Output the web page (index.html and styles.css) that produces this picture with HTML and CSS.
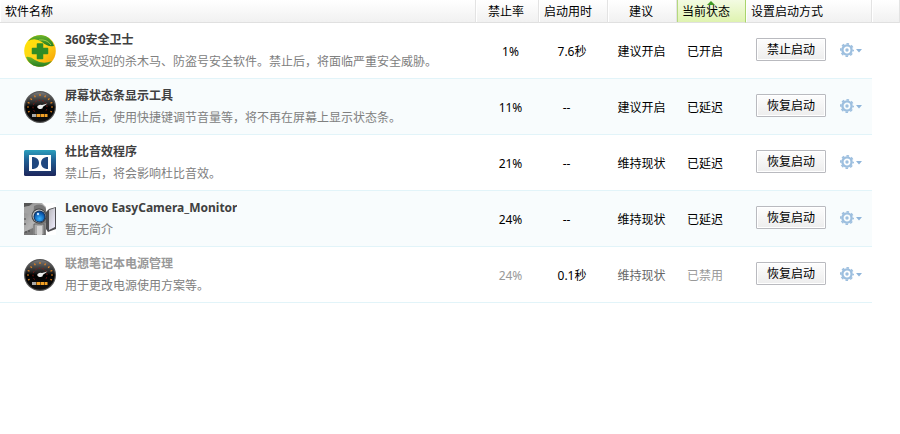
FILE: index.html
```html
<!DOCTYPE html>
<html lang="zh-CN">
<head>
    <meta charset="UTF-8">
    <meta name="viewport" content="width=device-width, initial-scale=1.0">
    <title>启动项</title>
    <link rel="stylesheet" href="styles.css">
</head>
<body>
    <!-- shared icons -->
    <svg class="defs" width="0" height="0">
        <defs>
            <linearGradient id="gYellow" x1="0" y1="0" x2="1" y2="1">
                <stop offset="0" stop-color="#ffe600"/>
                <stop offset="0.5" stop-color="#ffd51a"/>
                <stop offset="1" stop-color="#f59a00"/>
            </linearGradient>
            <linearGradient id="gGreen" x1="0" y1="0" x2="0" y2="1">
                <stop offset="0" stop-color="#6db52c"/>
                <stop offset="1" stop-color="#237d22"/>
            </linearGradient>
            <linearGradient id="gDial" x1="0" y1="0" x2="0" y2="1">
                <stop offset="0" stop-color="#777"/>
                <stop offset="0.4" stop-color="#222"/>
                <stop offset="0.5" stop-color="#000"/>
                <stop offset="1" stop-color="#111"/>
            </linearGradient>
            <linearGradient id="gDolby" x1="0" y1="0" x2="0" y2="1">
                <stop offset="0" stop-color="#2b9fbd"/>
                <stop offset="0.4" stop-color="#205f94"/>
                <stop offset="1" stop-color="#1d265c"/>
            </linearGradient>
            <linearGradient id="gMetal" x1="0" y1="0" x2="1" y2="1">
                <stop offset="0" stop-color="#858585"/>
                <stop offset="0.5" stop-color="#b5b5b5"/>
                <stop offset="1" stop-color="#777"/>
            </linearGradient>
            <linearGradient id="gScreen" x1="0" y1="0" x2="1" y2="1">
                <stop offset="0" stop-color="#b8b8bc"/>
                <stop offset="1" stop-color="#f0eeff"/>
            </linearGradient>
            <radialGradient id="gLens" cx="0.5" cy="0.7" r="0.6">
                <stop offset="0" stop-color="#38b4ff"/>
                <stop offset="1" stop-color="#0752a8"/>
            </radialGradient>
            <symbol id="dial" viewBox="0 0 32 32">
                <circle cx="16" cy="16" r="16" fill="#555"/>
                <circle cx="16" cy="16" r="14.8" fill="url(#gDial)"/>
                <path d="M3 16h2M3.700 11.500l1.800.600M6.500 7.500l1.400 1.200M10.500 4.500l.800 1.700M16 3v2M21.500 4.500l-.800 1.700M25.500 7.500l-1.400 1.200M28.300 11.500l-1.800.600M29 16h-2M4 21l1.600-.600M28 21l-1.600-.600" stroke="#e8851f" stroke-width="1.2"/>
                <path d="M10.500 20.500A7 7 0 1 1 21.500 20.500" fill="none" stroke="#8e1a14" stroke-width="1" stroke-dasharray="1.5 2"/>
                <path d="M13.500 15Q16 13 18 14L23.500 12.600L19 15.800Q19 18.500 15.500 18Q12.500 17 13.500 15Z" fill="#eee"/>
                <path d="M8 23h4v3H8z" fill="#aaa"/>
                <path d="M12.500 23h4v3h-4zM17 23h3v3h-3zM20.500 23h3v3h-3z" fill="#f2a126"/>
            </symbol>
            <symbol id="gear" viewBox="0 0 22 14">
                <circle cx="7" cy="7" r="6.200" fill="none" stroke="#9dbfdf" stroke-width="1.600" stroke-dasharray="2.600 2.270" stroke-dashoffset="1.300"/>
                <circle cx="7" cy="7" r="4.600" fill="none" stroke="#9dbfdf" stroke-width="2.400"/>
                <circle cx="7" cy="7" r="1.700" fill="#9dbfdf"/>
                <path d="M16 6h6l-3 3.400z" fill="#8fb5da"/>
            </symbol>
        </defs>
    </svg>

    <table class="list">
        <colgroup>
            <col>
            <col class="col-rate">
            <col class="col-time">
            <col class="col-advice">
            <col class="col-state">
            <col class="col-action">
            <col class="col-rest">
        </colgroup>
        <thead>
            <tr>
                <th>软件名称</th>
                <th class="center">禁止率</th>
                <th>启动用时</th>
                <th class="center">建议</th>
                <th class="sorted">当前状态<svg class="sort-arrow" width="8" height="4" viewBox="0 0 8 4"><path d="M4 0L8 4H0z" fill="#3f9a24"/></svg></th>
                <th>设置启动方式</th>
                <th></th>
            </tr>
        </thead>
        <tbody>
            <tr>
                <td>
                    <div class="app">
                        <svg class="app-icon" viewBox="0 0 32 32">
                            <circle cx="16" cy="16" r="15.8" fill="url(#gYellow)"/>
                            <path d="M4 6Q9 0 17 0Q27 1 30 11Q23 12 18 7Q11 2 4 6Z" fill="url(#gGreen)"/>
                            <path d="M2 22Q6 21 11 25Q19 30 28 26Q22 33 13 31.600Q5 30 2 22Z" fill="url(#gGreen)"/>
                            <path d="M15 5Q23 4 27 10" fill="none" stroke="#b5d94a" stroke-width="0.8"/>
                            <path d="M13.500 9h5v4.500h5v5h-5v5h-5v-5h-5v-5h5z" fill="#318c24" stroke="#318c24" stroke-width="1.500" stroke-linejoin="round"/>
                        </svg>
                        <div class="app-text">
                            <div class="app-name">360安全卫士</div>
                            <div class="app-desc">最受欢迎的杀木马、防盗号安全软件。禁止后，将面临严重安全威胁。</div>
                        </div>
                    </div>
                </td>
                <td class="rate">1%</td>
                <td class="time">7.6秒</td>
                <td class="center">建议开启</td>
                <td class="state">已开启</td>
                <td>
                    <div class="actions">
                        <button class="btn" type="button">禁止启动</button>
                        <button class="gear-btn" type="button" aria-label="设置"><svg width="22" height="14"><use href="#gear"/></svg></button>
                    </div>
                </td>
            </tr>
            <tr class="alt">
                <td>
                    <div class="app">
                        <svg class="app-icon"><use href="#dial"/></svg>
                        <div class="app-text">
                            <div class="app-name">屏幕状态条显示工具</div>
                            <div class="app-desc">禁止后，使用快捷键调节音量等，将不再在屏幕上显示状态条。</div>
                        </div>
                    </div>
                </td>
                <td class="rate">11%</td>
                <td class="time none">--</td>
                <td class="center">建议开启</td>
                <td class="state">已延迟</td>
                <td>
                    <div class="actions">
                        <button class="btn" type="button">恢复启动</button>
                        <button class="gear-btn" type="button" aria-label="设置"><svg width="22" height="14"><use href="#gear"/></svg></button>
                    </div>
                </td>
            </tr>
            <tr>
                <td>
                    <div class="app">
                        <svg class="app-icon" viewBox="0 0 32 32">
                            <rect x="0" y="3" width="32" height="26" rx="1.5" fill="url(#gDolby)"/>
                            <path d="M5 8H27V24H5Z" fill="#fff"/>
                            <path d="M6.500 9.500H25.500V22.500H6.500Z" fill="#fff"/>
                            <path d="M8 10H9.500Q15 11 15 16Q15 21 9.500 22H8Z" fill="#1f477f"/>
                            <path d="M24 10H22.500Q17 11 17 16Q17 21 22.500 22H24Z" fill="#1f477f"/>
                        </svg>
                        <div class="app-text">
                            <div class="app-name">杜比音效程序</div>
                            <div class="app-desc">禁止后，将会影响杜比音效。</div>
                        </div>
                    </div>
                </td>
                <td class="rate">21%</td>
                <td class="time none">--</td>
                <td class="center">维持现状</td>
                <td class="state">已延迟</td>
                <td>
                    <div class="actions">
                        <button class="btn" type="button">恢复启动</button>
                        <button class="gear-btn" type="button" aria-label="设置"><svg width="22" height="14"><use href="#gear"/></svg></button>
                    </div>
                </td>
            </tr>
            <tr class="alt">
                <td>
                    <div class="app">
                        <svg class="app-icon" viewBox="0 0 32 32">
                            <path d="M0 0H32V32H0Z" fill="#fff"/>
                            <path d="M0 2L9 0H18L22 4V32H0Z" fill="url(#gMetal)"/>
                            <path d="M0 0H9L5 3L0 4Z" fill="#555"/>
                            <path d="M0 4L10 2L9 12L0 10Z" fill="#a2a2a2"/>
                            <path d="M0 29L9 25V32H0Z" fill="#777"/>
                            <path d="M2 30v-2M5 29v-2M1 15v2M1 20v2" stroke="#444" stroke-width="1"/>
                            <path d="M22 9L25 6L32 4V26L24 29L22 26Z" fill="#4d4d50"/>
                            <path d="M25 7L31 5V24L25 27Z" fill="url(#gScreen)"/>
                            <path d="M10 21H20V32H10Z" fill="#aaa" stroke="#555" stroke-width="0.8"/>
                            <path d="M13 23H18V32H13Z" fill="#d2d2d2"/>
                            <path d="M10 3Q18-1 22 6V20L17 22L9 18Z" fill="#777"/>
                            <circle cx="15" cy="13" r="7.500" fill="#444"/>
                            <circle cx="15" cy="13" r="6.500" fill="#ccc"/>
                            <circle cx="15.500" cy="13.500" r="6" fill="#163861"/>
                            <circle cx="15.500" cy="13.700" r="4.900" fill="url(#gLens)"/>
                            <circle cx="14" cy="11" r="1.200" fill="#c5e4ff"/>
                        </svg>
                        <div class="app-text">
                            <div class="app-name">Lenovo EasyCamera_Monitor</div>
                            <div class="app-desc">暂无简介</div>
                        </div>
                    </div>
                </td>
                <td class="rate">24%</td>
                <td class="time none">--</td>
                <td class="center">维持现状</td>
                <td class="state">已延迟</td>
                <td>
                    <div class="actions">
                        <button class="btn" type="button">恢复启动</button>
                        <button class="gear-btn" type="button" aria-label="设置"><svg width="22" height="14"><use href="#gear"/></svg></button>
                    </div>
                </td>
            </tr>
            <tr class="disabled">
                <td>
                    <div class="app">
                        <svg class="app-icon"><use href="#dial"/></svg>
                        <div class="app-text">
                            <div class="app-name">联想笔记本电源管理</div>
                            <div class="app-desc">用于更改电源使用方案等。</div>
                        </div>
                    </div>
                </td>
                <td class="rate">24%</td>
                <td class="time">0.1秒</td>
                <td class="center advice">维持现状</td>
                <td class="state">已禁用</td>
                <td>
                    <div class="actions">
                        <button class="btn" type="button">恢复启动</button>
                        <button class="gear-btn" type="button" aria-label="设置"><svg width="22" height="14"><use href="#gear"/></svg></button>
                    </div>
                </td>
            </tr>
        </tbody>
    </table>
</body>
</html>
```
FILE: styles.css
```css
* {
    box-sizing: border-box;
}
body {
    margin: 0;
    background: #fff;
    color: #000;
    font-family: "Noto Sans", "Noto Sans CJK SC", sans-serif;
    font-size: 12px;
    line-height: 22px;
}
.defs {
    position: absolute;
}
.list {
    width: 100%;
    table-layout: fixed;
    border-collapse: separate;
    border-spacing: 0;
}
.col-rate {
    width: 63px;
}
.col-time,
.col-advice,
.col-state {
    width: 69px;
}
.col-action {
    width: 126px;
}
.col-rest {
    width: 28px;
}

/* header */
th {
    height: 23px;
    padding: 2px 0 0 5px;
    border-right: 1px solid #e3e3e3;
    border-bottom: 1px solid #e0e0e0;
    background: linear-gradient(#fff, #f1f1f1);
    box-shadow: inset 1px 0 #fff;
    font-weight: normal;
    line-height: 20px;
    text-align: left;
    white-space: nowrap;
}
th.center {
    padding: 2px 2px 0 0;
}
th.sorted {
    position: relative;
    border-right-color: #a9d46c;
    background: linear-gradient(#f3fbe2, #dff3b0);
    box-shadow: inset 1px 0 #b5d97f;
}
.sort-arrow {
    position: absolute;
    top: 1px;
    left: 50%;
    margin-left: -4px;
}

/* rows */
td {
    height: 56px;
    padding: 0;
    border-bottom: 1px solid #e2f4f9;
    white-space: nowrap;
}
.alt td {
    background: #f8fcfd;
}
.center {
    text-align: center;
}
td.center {
    padding: 2px 2px 0 0;
}
.rate {
    padding: 2px 0 0 6px;
    text-align: center;
}
.time {
    padding: 2px 3px 0 0;
    text-align: center;
}
.time.none {
    padding-right: 14px;
}
.state {
    padding: 2px 0 0 10px;
}
.app {
    display: flex;
    align-items: center;
    gap: 9px;
    padding-left: 24px;
}
.app-icon {
    flex: none;
    width: 32px;
    height: 32px;
}
.app-text {
    min-width: 0;
}
.app-name,
.app-desc {
    overflow: hidden;
    text-overflow: ellipsis;
}
.app-name {
    color: #404040;
    font-weight: bold;
}
.app-desc {
    color: #808080;
}
.disabled .app-name,
.disabled .rate,
.disabled .state {
    color: #999;
}
.disabled .advice {
    color: #666;
}
.actions {
    display: flex;
    align-items: center;
    gap: 14px;
    padding: 0 0 2px 10px;
}
.btn {
    width: 70px;
    height: 23px;
    padding: 0;
    border: 1px solid #b9babf;
    border-radius: 1px;
    background: linear-gradient(#fdfdfd, #ededed);
    box-shadow: inset 0 0 0 1px #fff;
    color: #000;
    font: inherit;
    line-height: 20px;
    cursor: pointer;
}
.gear-btn {
    display: flex;
    padding: 0;
    border: 0;
    background: none;
    cursor: pointer;
}
```
